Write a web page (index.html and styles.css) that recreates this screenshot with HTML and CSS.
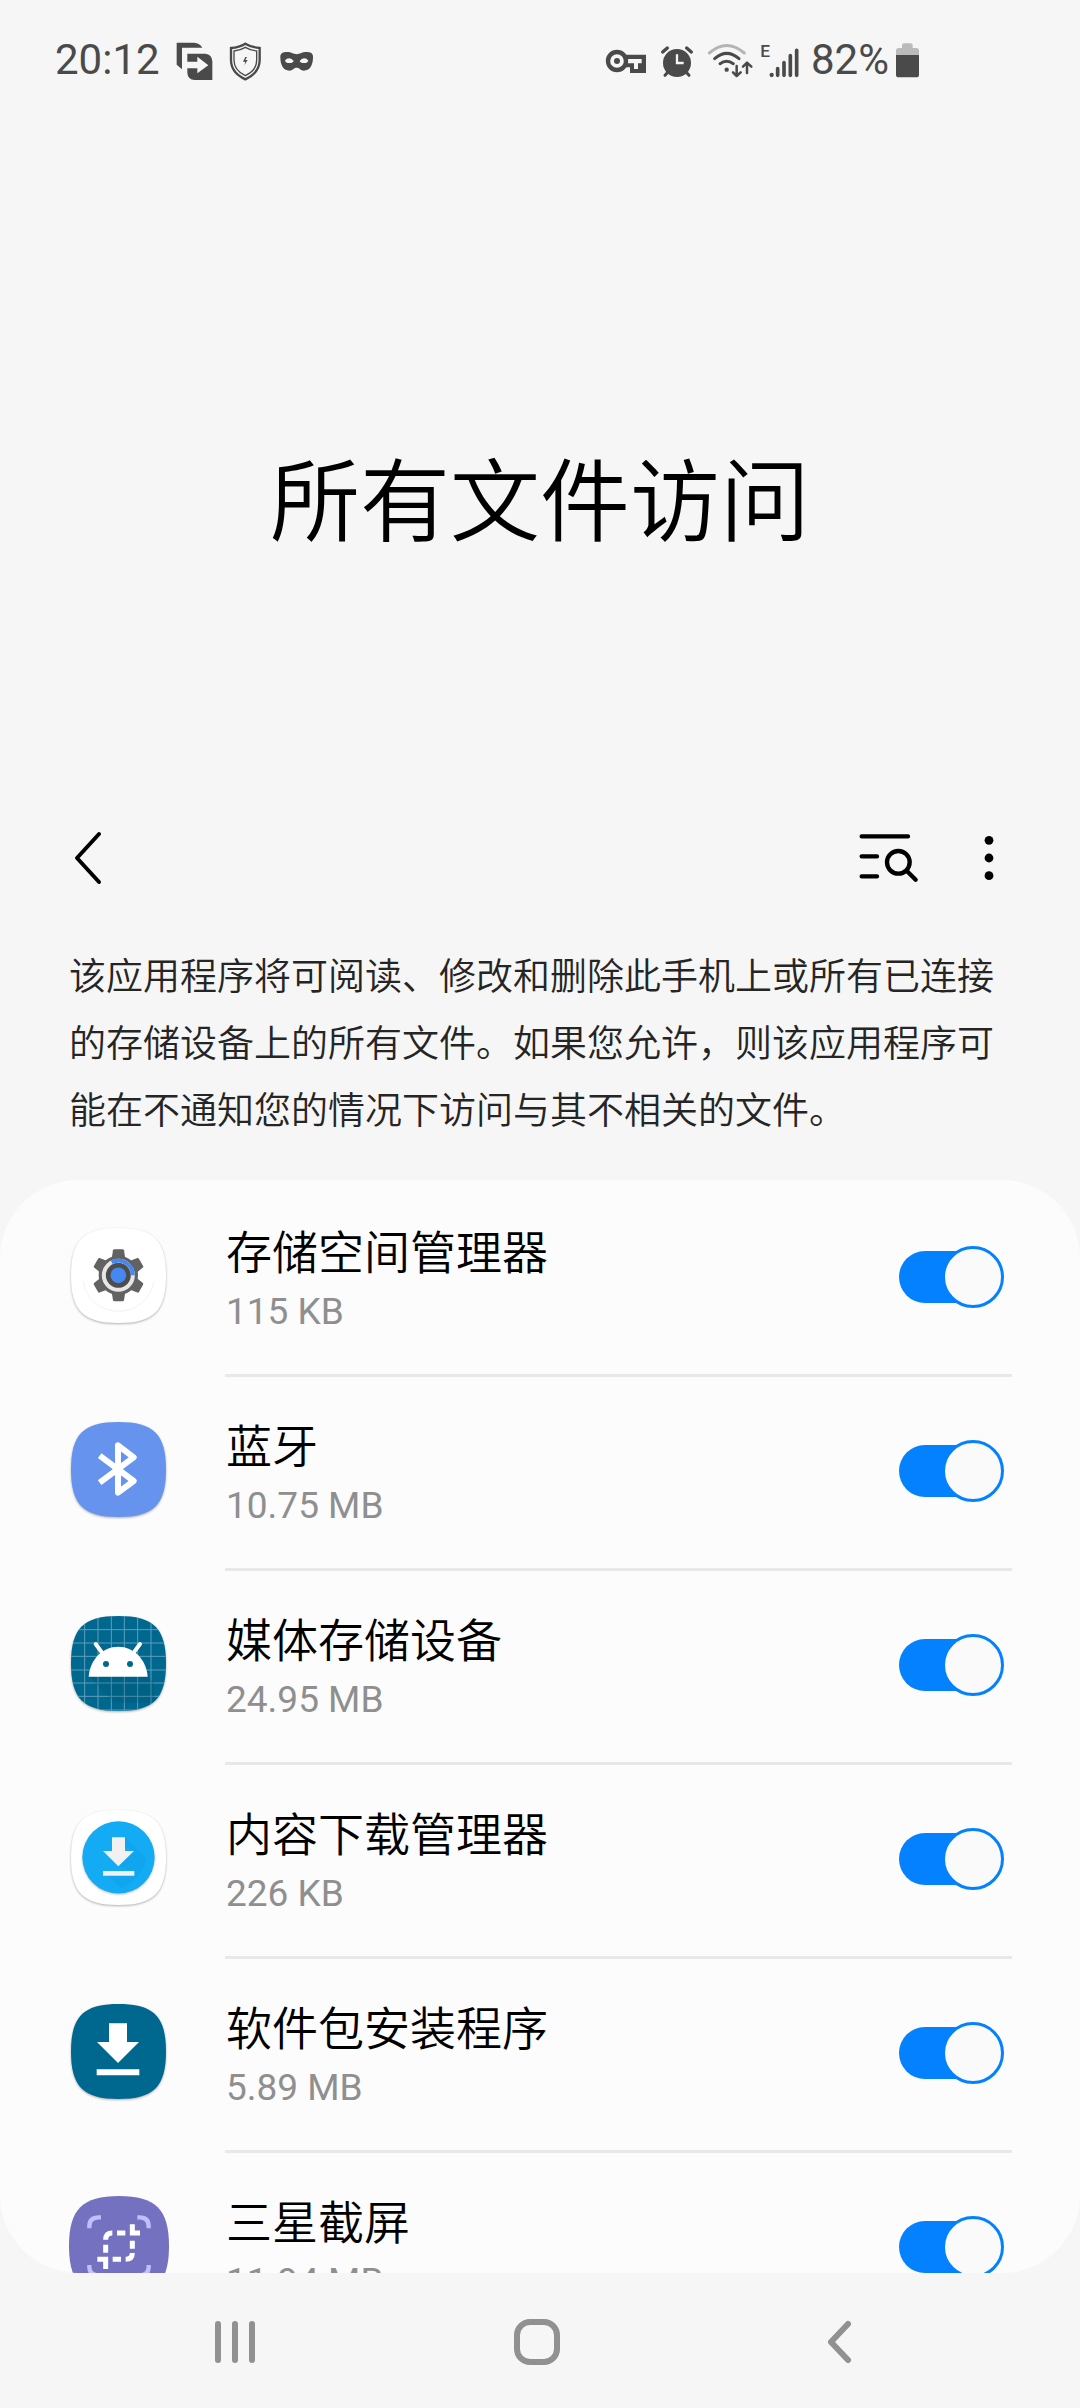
FILE: index.html
```html
<!DOCTYPE html>
<html lang="zh-CN">
<head>
    <meta charset="UTF-8">
    <title>所有文件访问</title>
    <link rel="stylesheet" href="styles.css">
</head>
<body>
    <div class="status-bar">
        <span class="clock">20:12</span>
        <svg class="st-share" viewBox="402 0 120 240">
            <path d="M410 68H462Q480 70 487 83H426V148L410 134Z"/>
            <path fill-rule="evenodd" d="M442 101H496Q516 103 517 124V180H464Q443 178 442 158V145H472V160L505 136L472 110V125H442Z"/>
        </svg>
        <svg class="st-shield" viewBox="564 0 102 240">
            <path class="line" stroke-width="7" d="M616 71Q598 82 573 84V120Q573 158 616 178Q659 158 659 120V84Q634 82 616 71Z"/>
            <path class="line" stroke-width="4" d="M616 82Q601 91 582 93V120Q582 151 616 167Q650 151 650 120V93Q631 91 616 82Z"/>
            <path d="M616 111L609 125H616L613 136L623 120H616L621 111Z"/>
        </svg>
        <svg class="st-mask" viewBox="714 0 108 240">
            <path fill-rule="evenodd" d="M721 112C720 97 735 95 750 97Q770 108 790 97C806 95 820 97 819 112C819 138 808 152 792 152C782 151 778 143 770 143C762 143 758 151 748 152C732 152 721 138 721 112ZM735 122Q737 129 748 129Q759 129 761 123Q755 116 748 115Q739 115 735 122ZM779 123Q781 129 792 129Q803 129 805 122Q801 115 792 115Q785 116 779 123Z"/>
        </svg>

        <div class="status-right">
            <svg class="st-key" viewBox="42 0 132 240">
                <circle class="line" stroke-width="13" cx="81" cy="123" r="27"/>
                <circle cx="81" cy="123" r="9"/>
                <path fill-rule="evenodd" d="M102 104H168V159H120V142H102V130H132V147H144V130H155V117H102Z"/>
            </svg>
            <svg class="st-alarm" viewBox="210 0 102 240">
                <circle cx="261" cy="129" r="42"/>
                <path class="line round" stroke-width="10" d="M218 96L232 84M290 84L304 96"/>
                <path class="line round" stroke-width="9" d="M225 166L234 156M297 166L288 156"/>
                <path fill="none" stroke="#f6f6f6" stroke-width="7" d="M261 103V129H281"/>
            </svg>
            <svg class="st-wifi" viewBox="348 0 144 240">
                <path fill="none" stroke="#b4b4b4" stroke-width="9" stroke-linecap="round" d="M358 99Q410 54 463 99"/>
                <path class="line round" stroke-width="9" d="M374 116Q410 84 447 116M390 131Q410 117 430 131"/>
                <circle cx="410" cy="149" r="6.5"/>
                <path class="line round" stroke-width="7.5" d="M440 138V167M429 157L440 168L452 157M471 159V130M459 140L471 128L484 140"/>
            </svg>
            <svg class="st-signal" viewBox="510 0 120 240">
                <text class="network" x="511" y="112">E</text>
                <circle cx="545" cy="165" r="6.5"/>
                <path class="line round" stroke-width="11" d="M563 146V166M582 128V166M601 107V166M620 91V166"/>
            </svg>
            <span class="battery-text">82%</span>
            <svg class="st-battery" viewBox="915 0 75 240">
                <path fill="#bbb" d="M918 105V92Q918 84 926 84H936V76Q936 70 942 70H962Q968 70 968 76V84H979Q987 84 987 92V105Z"/>
                <path d="M918 105H987V164Q987 172 979 172H926Q918 172 918 164Z"/>
            </svg>
        </div>
    </div>

    <h1>所有文件访问</h1>

    <div class="toolbar">
        <svg class="tb-back" viewBox="0 0 40 60">
            <path d="M29 6L7 30L29 54"/>
        </svg>
        <svg class="tb-search" viewBox="54 72 186 150">
            <path d="M65 82H204M65 142H111M65 202H111"/>
            <circle cx="175" cy="160" r="34"/>
            <path d="M200 185L227 212"/>
        </svg>
        <svg class="tb-more" viewBox="0 0 20 60">
            <circle cx="10" cy="12.3" r="4.4"/>
            <circle cx="10" cy="30" r="4.4"/>
            <circle cx="10" cy="47.7" r="4.4"/>
        </svg>
    </div>

    <p class="description">该应用程序将可阅读、修改和删除此手机上或所有已连接<br>的存储设备上的所有文件。如果您允许，则该应用程序可<br>能在不通知您的情况下访问与其不相关的文件。</p>

    <div class="list">
        <div class="row">
            <svg class="app-icon" viewBox="0 0 285 285">
                <path class="tile" fill="#fff" d="M142.500 0C248 0 285 37 285 142.500S248 285 142.500 285S0 248 0 142.500S37 0 142.500 0Z"/>
                <path fill="none" stroke="#e4e4e4" stroke-width="1.500" d="M36 160A108 108 0 0 0 249 160"/>
                <g fill="#626262">
                    <circle cx="142" cy="142" r="59"/>
                    <path id="tooth" d="M122 92L126 67Q127 64 130 64H155Q158 64 159 67L163 92Z"/>
                    <use href="#tooth" transform="rotate(60 142.500 142)"/>
                    <use href="#tooth" transform="rotate(120 142.500 142)"/>
                    <use href="#tooth" transform="rotate(180 142.500 142)"/>
                    <use href="#tooth" transform="rotate(240 142.500 142)"/>
                    <use href="#tooth" transform="rotate(300 142.500 142)"/>
                </g>
                <circle cx="142" cy="142" r="37" fill="#4d4d4d"/>
                <circle cx="142" cy="142" r="43.500" fill="none" stroke="#e6e6e6" stroke-width="12"/>
                <path fill="none" stroke="#4688f1" stroke-width="12" d="M122 103A43.500 43.500 0 0 1 185.500 142"/>
                <circle cx="142" cy="142" r="23.500" fill="#4688f1"/>
            </svg>
            <div class="row-body">
                <div class="row-text">
                    <div class="name">存储空间管理器</div>
                    <div class="size">115 KB</div>
                </div>
                <div class="switch"></div>
            </div>
        </div>

        <div class="row">
            <svg class="app-icon" viewBox="0 0 285 285">
                <path class="tile" fill="#6693ed" d="M142.500 0C248 0 285 37 285 142.500S248 285 142.500 285S0 248 0 142.500S37 0 142.500 0Z"/>
                <path fill="none" stroke="#fff" stroke-width="18" stroke-linejoin="round" d="M86 101L188 177L141 212V70L188 106L86 182"/>
            </svg>
            <div class="row-body">
                <div class="row-text">
                    <div class="name">蓝牙</div>
                    <div class="size">10.75 MB</div>
                </div>
                <div class="switch"></div>
            </div>
        </div>

        <div class="row">
            <svg class="app-icon" viewBox="0 0 285 285">
                <clipPath id="tile-clip">
                    <path d="M142.500 0C248 0 285 37 285 142.500S248 285 142.500 285S0 248 0 142.500S37 0 142.500 0Z"/>
                </clipPath>
                <path class="tile" fill="#00678e" d="M142.500 0C248 0 285 37 285 142.500S248 285 142.500 285S0 248 0 142.500S37 0 142.500 0Z"/>
                <g clip-path="url(#tile-clip)">
                    <path stroke="#5d9fb8" stroke-width="3" d="M41 0V285M81 0V285M121 0V285M160 0V285M200 0V285M240 0V285M0 41H285M0 81H285M0 121H285M0 162H285M0 201H285M0 241H285M0 282H285"/>
                    <path fill="#004e6c" fill-opacity=".22" d="M53 182H230L250 202V260H131Z"/>
                </g>
                <path fill="#fff" d="M53 182C57 130 95 92 141.500 92S226 130 230 182Z"/>
                <path stroke="#fff" stroke-width="12" stroke-linecap="round" d="M74 84L93 110M207 84L188 110"/>
                <circle cx="105" cy="144" r="9" fill="#00678e"/>
                <circle cx="177" cy="144" r="9" fill="#00678e"/>
            </svg>
            <div class="row-body">
                <div class="row-text">
                    <div class="name">媒体存储设备</div>
                    <div class="size">24.95 MB</div>
                </div>
                <div class="switch"></div>
            </div>
        </div>

        <div class="row">
            <svg class="app-icon" viewBox="0 0 285 285">
                <path class="tile" fill="#fff" d="M142.500 0C248 0 285 37 285 142.500S248 285 142.500 285S0 248 0 142.500S37 0 142.500 0Z"/>
                <circle class="disc" cx="142.500" cy="142" r="108.500" fill="#14abf5"/>
                <path fill="#0a9be4" fill-opacity=".35" d="M162 82L225 145Q215 205 150 235L112 197H190V183L142 169L189 123L162 110Z"/>
                <path fill="#f1f1f1" d="M123 82H162V123H189L142 169L96 123H123ZM96 183H190V197H96Z"/>
            </svg>
            <div class="row-body">
                <div class="row-text">
                    <div class="name">内容下载管理器</div>
                    <div class="size">226 KB</div>
                </div>
                <div class="switch"></div>
            </div>
        </div>

        <div class="row">
            <svg class="app-icon" viewBox="0 0 285 285">
                <path class="tile" fill="#00678e" d="M142.500 0C248 0 285 37 285 142.500S248 285 142.500 285S0 248 0 142.500S37 0 142.500 0Z"/>
                <path fill="#fff" d="M114 58H168V114H204L141 177L78 114H114ZM77 196H205V214H77Z"/>
            </svg>
            <div class="row-body">
                <div class="row-text">
                    <div class="name">软件包安装程序</div>
                    <div class="size">5.89 MB</div>
                </div>
                <div class="switch"></div>
            </div>
        </div>

        <div class="row">
            <svg class="app-icon large" viewBox="0 0 300 300">
                <path fill="#7471c0" d="M150 0C260 0 300 40 300 150S260 300 150 300S0 260 0 150S40 0 150 0Z"/>
                <path fill="none" stroke="#c0befc" stroke-width="13" d="M61 97V91Q61 64 90 64H96M205 64H211Q239 64 239 91V97M61 207V213Q61 238 90 238H96M205 238H211Q239 238 239 213V207"/>
                <path fill="none" stroke="#fff" stroke-width="15" d="M110 131Q110 111 130 111M144 111H169M190 85V111H213M190 134V158M190 171Q190 190 170 190M156 190H131M110 170V146M85 190H110V219"/>
            </svg>
            <div class="row-body">
                <div class="row-text">
                    <div class="name">三星截屏</div>
                    <div class="size">11.94 MB</div>
                </div>
                <div class="switch"></div>
            </div>
        </div>
    </div>

    <div class="nav-bar">
        <svg viewBox="0 0 60 60">
            <path d="M13 12V48M30 12V48M47 12V48"/>
        </svg>
        <svg viewBox="0 0 60 60">
            <rect x="10" y="10" width="40" height="40" rx="13"/>
        </svg>
        <svg viewBox="0 0 60 60">
            <path d="M39 12L22 30L39 48"/>
        </svg>
    </div>
</body>
</html>
```

FILE: styles.css
```css
body {
    margin: 0;
    width: 1080px;
    height: 2408px;
    overflow: hidden;
    background-color: #f6f6f6;
    font-family: Roboto, "Noto Sans CJK SC", sans-serif;
    color: #000;
}

svg {
    display: block;
    flex: none;
}

/* status bar */
.status-bar {
    display: flex;
    height: 80px;
    padding: 20px 160px 0 55px;
    font-size: 42px;
    line-height: 80px;
    color: #4a4a4a;
    fill: #4a4a4a;
}

.status-bar svg {
    height: 80px;
}

.clock {
    width: 119px;
}

.line {
    fill: none;
    stroke: #4a4a4a;
}

.round {
    stroke-linecap: round;
    stroke-linejoin: round;
}

.st-share {
    width: 40px;
}

.st-shield {
    width: 34px;
    margin-left: 14px;
}

.st-mask {
    width: 36px;
    margin-left: 16px;
}

.status-right {
    display: flex;
    margin-left: auto;
}

.st-key {
    width: 44px;
}

.st-alarm {
    width: 34px;
    margin-left: 12px;
}

.st-wifi {
    width: 48px;
    margin-left: 12px;
}

.st-signal {
    width: 40px;
    margin-left: 6px;
}

.network {
    font-size: 52px;
    font-weight: 500;
}

.battery-text {
    width: 84px;
    margin-left: 11px;
}

.st-battery {
    width: 25px;
}

/* header */
h1 {
    margin: 330px 0 0;
    font-family: "Noto Sans CJK SC", sans-serif;
    font-size: 90px;
    font-weight: 350;
    line-height: 130px;
    text-align: center;
}

.toolbar {
    display: flex;
    align-items: center;
    height: 100px;
    margin-top: 248px;
    padding: 0 81px 0 70px;
    fill: none;
    stroke: #000;
    stroke-linecap: round;
    stroke-linejoin: round;
}

.tb-back {
    width: 40px;
    height: 60px;
    stroke-width: 4;
}

.tb-search {
    width: 62px;
    height: 50px;
    margin-left: auto;
    stroke-width: 13;
}

.tb-more {
    width: 20px;
    height: 60px;
    margin-left: 59px;
    fill: #000;
    stroke: none;
}

.description {
    margin: 33px 0 38px 69px;
    font-family: "Noto Sans CJK SC", sans-serif;
    font-size: 37px;
    font-weight: 350;
    line-height: 67px;
    color: #252525;
    white-space: nowrap;
}

/* app list */
.list {
    height: 1093px;
    overflow: hidden;
    border-radius: 78px;
    background-color: #fcfcfc;
}

.row {
    display: flex;
    height: 194px;
    padding: 0 68px 0 71px;
}

.app-icon {
    width: 95px;
    height: 95px;
    margin-top: 48px;
    overflow: visible;
}

.app-icon.large {
    width: 100px;
    height: 100px;
    margin: 46px -3px 0 -2px;
}

.tile {
    filter: drop-shadow(0 3px 3px rgba(0, 0, 0, 0.3));
}

.disc {
    filter: drop-shadow(0 3px 3px rgba(0, 0, 0, 0.25));
}

.row-body {
    display: flex;
    flex: 1;
    justify-content: space-between;
    box-sizing: border-box;
    margin-left: 59px;
    padding: 0 8px 0 1px;
    border-top: 3px solid #e8e8e8;
}

.row:first-child .row-body {
    border-color: transparent;
}

.name {
    margin-top: 37px;
    font-family: "Noto Sans CJK SC", sans-serif;
    font-size: 46px;
    font-weight: 350;
    line-height: 58px;
}

.size {
    margin-top: 12px;
    font-size: 37px;
    line-height: 43px;
    color: #8f8f8f;
}

.switch {
    display: flex;
    align-items: center;
    justify-content: flex-end;
    width: 105px;
    height: 52px;
    margin-top: 68px;
    border-radius: 26px;
    background: linear-gradient(to right, #0381fe 80px, transparent 80px);
}

.switch::after {
    content: "";
    flex: none;
    width: 56px;
    height: 56px;
    border: 3px solid #0381fe;
    border-radius: 50%;
    background-color: #fafafa;
}

/* navigation bar */
.nav-bar {
    display: flex;
    align-items: center;
    justify-content: space-between;
    height: 132px;
    padding: 3px 211px 0 205px;
    fill: none;
    stroke: #919191;
    stroke-width: 6;
    stroke-linecap: round;
    stroke-linejoin: round;
}

.nav-bar svg {
    width: 60px;
    height: 60px;
}
```
